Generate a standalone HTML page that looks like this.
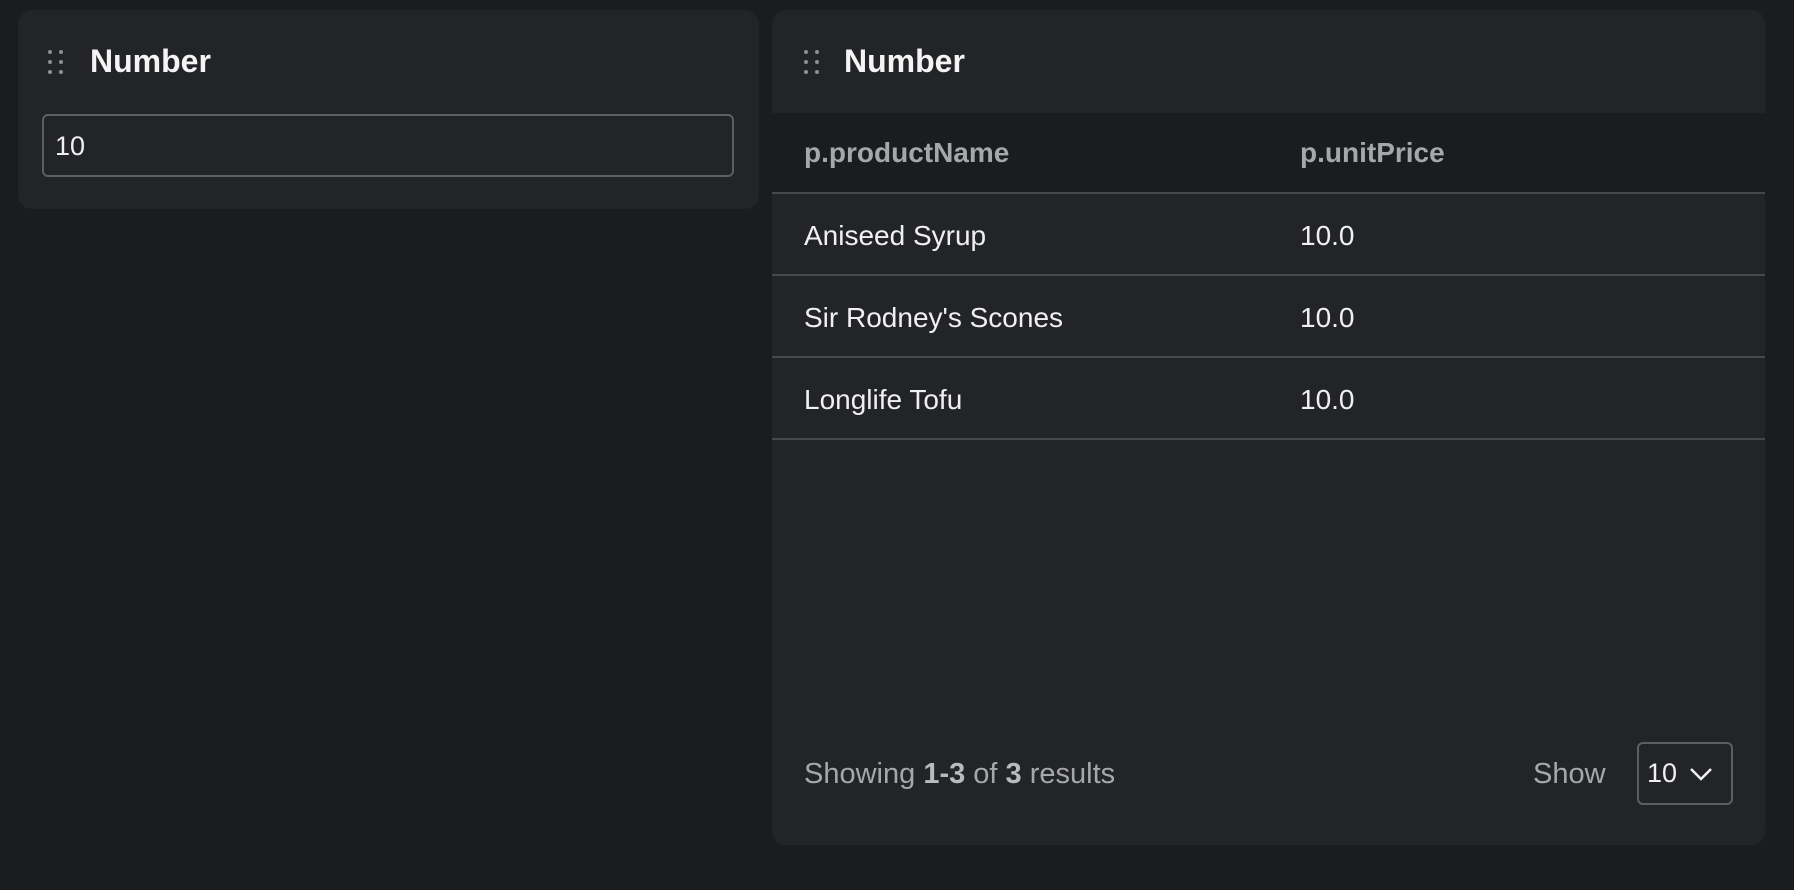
<!DOCTYPE html>
<html><head><meta charset="utf-8"><style>
*{box-sizing:border-box;margin:0;padding:0}
body{width:1794px;height:890px;background:#1b1c1e;font-family:"Liberation Sans",sans-serif;color:#f0f0f0;position:relative;overflow:hidden}
.panel{position:absolute;background:#232427;border-radius:14px}
.title{position:absolute;font-weight:bold;font-size:32px;color:#f4f4f4}
.grip{position:absolute;width:18px;height:26px}
.grip i{position:absolute;width:4px;height:4px;border-radius:2px;background:#8e8f93}
.input{position:absolute;left:24px;top:104px;width:692px;height:63px;border:2px solid #5c5e63;border-radius:6px;font-size:27px;padding:15px 11px}
.thead{position:absolute;left:0;right:0;top:103px;height:81px;background:#1b1c1e;border-bottom:2px solid #46484c}
.th{position:absolute;font-weight:bold;font-size:28px;color:#a6a7ab;top:24px}
.row{position:absolute;left:0;right:0;height:82px;border-bottom:2px solid #46484c;font-size:28px}
.row span{position:absolute;top:26px}
.foot{position:absolute;font-size:29px;color:#a6a7ab}
.foot b{color:#b9babe}
</style></head><body>
<div class="panel" style="left:18px;top:10px;width:741px;height:199px">
 <div class="grip" style="left:30px;top:40px"><i style="left:0;top:0"></i><i style="left:11px;top:0"></i><i style="left:0;top:10px"></i><i style="left:11px;top:10px"></i><i style="left:0;top:20px"></i><i style="left:11px;top:20px"></i></div>
 <div class="title" style="left:72px;top:33px">Number</div>
 <div class="input">10</div>
</div>
<div class="panel" style="left:772px;top:10px;width:993px;height:835px;overflow:hidden">
 <div class="grip" style="left:32px;top:40px"><i style="left:0;top:0"></i><i style="left:11px;top:0"></i><i style="left:0;top:10px"></i><i style="left:11px;top:10px"></i><i style="left:0;top:20px"></i><i style="left:11px;top:20px"></i></div>
 <div class="title" style="left:72px;top:33px">Number</div>
 <div class="thead"><span class="th" style="left:32px">p.productName</span><span class="th" style="left:528px">p.unitPrice</span></div>
 <div class="row" style="top:184px"><span style="left:32px">Aniseed Syrup</span><span style="left:528px">10.0</span></div>
 <div class="row" style="top:266px"><span style="left:32px">Sir Rodney's Scones</span><span style="left:528px">10.0</span></div>
 <div class="row" style="top:348px"><span style="left:32px">Longlife Tofu</span><span style="left:528px">10.0</span></div>
 <div class="foot" style="left:32px;top:748px">Showing <b>1-3</b> of <b>3</b> results</div>
 <div class="foot" style="left:761px;top:748px">Show</div>
 <div style="position:absolute;left:865px;top:732px;width:96px;height:63px;border:2px solid #5c5e63;border-radius:6px;font-size:27px;padding:14px 8px;color:#f0f0f0">10
  <svg style="position:absolute;left:50px;top:22px" width="24" height="16" viewBox="0 0 24 16"><path d="M2 3 L12 13 L22 3" stroke="#f0f0f0" stroke-width="2.5" fill="none"/></svg></div>
</div>
</body></html>
